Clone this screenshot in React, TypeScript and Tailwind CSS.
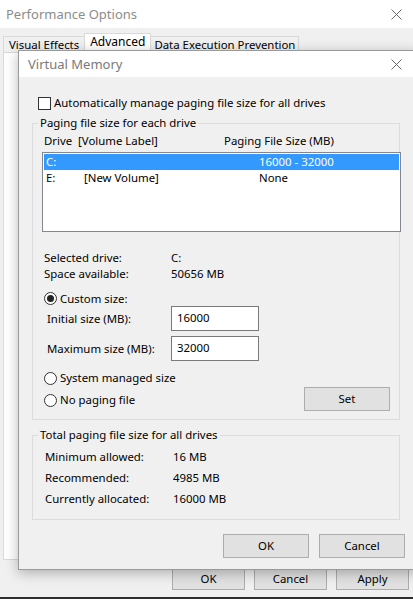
import React from "react";

const font = "font-['Noto_Sans',sans-serif] text-[11.4px] leading-[16px] text-black";

const CloseGlyph = () => (
  <svg width="11" height="11" viewBox="0 0 11 11" className="block">
    <path d="M0.5 0.5 L10.5 10.5 M10.5 0.5 L0.5 10.5" stroke="#6b6b6b" strokeWidth="1" />
  </svg>
);

const Button = ({ label, w, h }: { label: string; w: string; h: string }) => (
  <div
    className={`${w} ${h} flex items-center justify-center border border-[#adadad] bg-[#e1e1e1]`}
  >
    {label}
  </div>
);

const Radio = ({ checked }: { checked?: boolean }) => (
  <div className="w-[13px] h-[13px] rounded-full border border-[#333] bg-white flex items-center justify-center shrink-0">
    {checked && <div className="w-[7px] h-[7px] rounded-full bg-[#222]" />}
  </div>
);

const GroupBox = ({
  title,
  className,
  children,
}: {
  title: string;
  className: string;
  children: React.ReactNode;
}) => (
  <div className={`relative border border-[#dcdcdc] ${className}`}>
    <span className="absolute left-[5px] -top-[9px] px-[2px] bg-[#f0f0f0]">{title}</span>
    {children}
  </div>
);

const TextBox = ({ value }: { value: string }) => (
  <div className="w-[88px] h-[25px] border border-[#7a7a7a] bg-white pl-[5px] pt-[3px]">
    {value}
  </div>
);

function PerformanceOptions() {
  return (
    <div className="absolute left-0 top-0 w-[420px] h-[597px] bg-[#f0f0f0] flex flex-col">
      <div className="h-[28px] bg-white flex items-center justify-between pl-[6px] pr-[18px]">
        <span className="text-[#8c8c8c] text-[13px]">Performance Options</span>
        <CloseGlyph />
      </div>
      <div className="h-[24px] flex items-end pl-[3px] pt-[6px] whitespace-nowrap">
        <div className="h-[16px] px-[5px] border border-b-0 border-[#d9d9d9] bg-[#f0f0f0]">
          Visual Effects
        </div>
        <div className="h-[19px] px-[5px] border border-b-0 border-[#d9d9d9] bg-white -mx-[1px] text-[12px]">
          Advanced
        </div>
        <div className="h-[16px] px-[3px] border border-b-0 border-[#d9d9d9] bg-[#f0f0f0]">
          Data Execution Prevention
        </div>
      </div>
      <div className="ml-[3px] h-[508px] border border-[#d9d9d9] bg-white" />
      <div className="flex gap-[9px] pl-[172px] mt-[7px]">
        <Button label="OK" w="w-[73px]" h="h-[23px]" />
        <Button label="Cancel" w="w-[73px]" h="h-[23px]" />
        <Button label="Apply" w="w-[73px]" h="h-[23px]" />
      </div>
    </div>
  );
}

function VirtualMemory() {
  const totals = [
    ["Minimum allowed:", "16 MB"],
    ["Recommended:", "4985 MB"],
    ["Currently allocated:", "16000 MB"],
  ];

  return (
    <div className="absolute left-[18px] top-[50px] w-[402px] h-[520px] bg-[#f0f0f0] border border-[#9a9a9a] shadow-[0_3px_12px_rgba(0,0,0,0.28)] flex flex-col">
      <div className="h-[26px] bg-white flex items-center justify-between pl-[9px] pr-[17px] shrink-0">
        <span className="text-[#7a7a7a] text-[13px]">Virtual Memory</span>
        <CloseGlyph />
      </div>

      <div className="flex items-center gap-[3px] ml-[19px] mt-[19px] h-[14px]">
        <div className="w-[13px] h-[13px] border border-[#333] bg-white" />
        <span>Automatically manage paging file size for all drives</span>
      </div>

      <GroupBox title="Paging file size for each drive" className="ml-[13px] mt-[13px] w-[368px] pb-[8px]">
        <div className="flex h-[16px] mt-[9px] pl-[11px]">
          <span className="w-[180px]">Drive&nbsp; [Volume Label]</span>
          <span>Paging File Size (MB)</span>
        </div>
        <div className="ml-[9px] mr-[-2px] mt-[3px] h-[80px] border border-[#828790] bg-white p-[1px]">
          <div className="flex h-[16px] bg-[#3399ff] text-white pl-[2px]">
            <span className="w-[213px]">C:</span>
            <span>16000 - 32000</span>
          </div>
          <div className="flex h-[16px] pl-[2px]">
            <span className="w-[38px]">E:</span>
            <span className="w-[175px]">[New Volume]</span>
            <span>None</span>
          </div>
        </div>

        <div className="pl-[11px] mt-[18px]">
          <div className="flex h-[16px]">
            <span className="w-[127px]">Selected drive:</span>
            <span>C:</span>
          </div>
          <div className="flex h-[16px]">
            <span className="w-[127px]">Space available:</span>
            <span>50656 MB</span>
          </div>
        </div>

        <div className="flex items-center gap-[3px] pl-[11px] mt-[10px] h-[13px]">
          <Radio checked />
          <span>Custom size:</span>
        </div>
        <div className="flex items-center pl-[14px] mt-[1px] h-[25px]">
          <span className="w-[124px]">Initial size (MB):</span>
          <TextBox value="16000" />
        </div>
        <div className="flex items-center pl-[14px] mt-[5px] h-[25px]">
          <span className="w-[124px]">Maximum size (MB):</span>
          <TextBox value="32000" />
        </div>

        <div className="flex items-center gap-[3px] pl-[11px] mt-[10px] h-[14px]">
          <Radio />
          <span>System managed size</span>
        </div>
        <div className="flex items-center justify-between pl-[11px] pr-[9px] mt-[2px] h-[24px]">
          <div className="flex items-center gap-[3px] mt-[2px]">
            <Radio />
            <span>No paging file</span>
          </div>
          <Button label="Set" w="w-[86px]" h="h-[24px]" />
        </div>
      </GroupBox>

      <GroupBox title="Total paging file size for all drives" className="ml-[13px] mt-[15px] w-[368px] pt-[10px] pb-[10px]">
        {totals.map(([label, value]) => (
          <div key={label} className="flex items-center h-[21px] pl-[12px]">
            <span className="w-[128px]">{label}</span>
            <span>{value}</span>
          </div>
        ))}
      </GroupBox>

      <div className="flex gap-[10px] ml-[204px] mt-[14px]">
        <Button label="OK" w="w-[86px]" h="h-[24px]" />
        <Button label="Cancel" w="w-[86px]" h="h-[24px]" />
      </div>
    </div>
  );
}

export default function App() {
  return (
    <div className={`relative w-[413px] h-[599px] overflow-hidden bg-[#f0f0f0] ${font}`}>
      <PerformanceOptions />
      <VirtualMemory />
      <div className="absolute left-0 bottom-0 w-full h-[2px] bg-[#2e2e2e]" />
    </div>
  );
}
